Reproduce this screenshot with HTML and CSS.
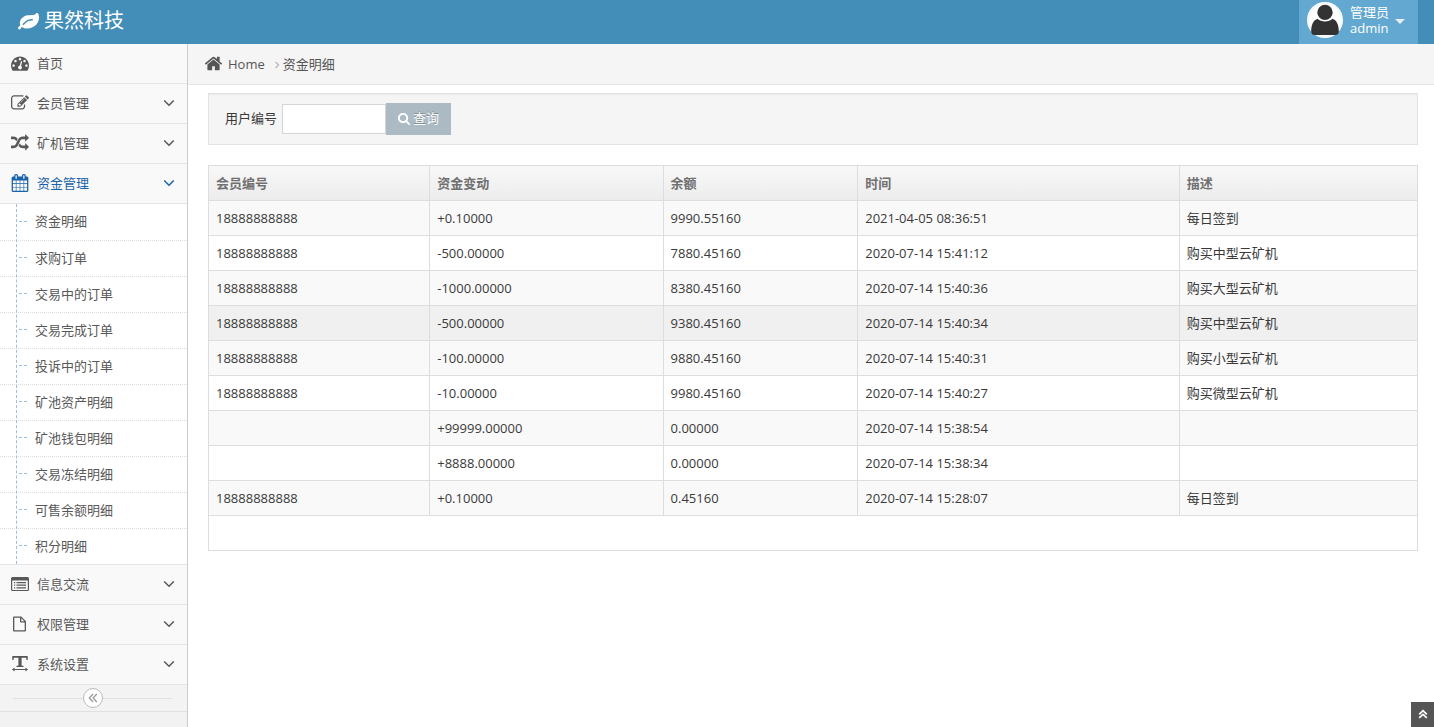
FILE: index.html
```
<!DOCTYPE html>
<html lang="zh-CN">
<head>
<meta charset="utf-8">
<title>资金明细</title>
<link rel="stylesheet" href="styles.css">
</head>
<body>
<svg class="sprite" aria-hidden="true">
  <symbol id="leaf" viewBox="0 0 1792 1792"><path d="M1280 832q0-26-19-45t-45-19q-172 0-318 49.5t-259.5 134-235.5 219.5q-19 21-19 45 0 26 19 45t45 19q24 0 45-19 27-24 74-71t67-66q137-124 268.5-176t313.5-52q26 0 45-19t19-45zm512-198q0 95-20 193-46 224-184.5 383t-357.5 268q-214 108-438 108-148 0-286-47-15-5-88-42t-96-37q-16 0-39.5 32t-45 70-52.5 70-60 32q-43 0-63.5-17.5t-45.5-59.5q-2-4-6-11t-5.5-10-3-9.5-1.5-13.5q0-35 31-73.5t68-65.5 68-56 31-48q0-4-14-38t-16-44q-9-51-9-104 0-115 43.5-220t119-184.5 170.5-139 204-95.5q55-18 145-25.5t179.5-9 178.5-6 163.5-24 113.5-56.5l29.5-29.5 29.5-28 27-20 36.5-16 43.5-4.5q39 0 70.5 46t47.5 112 24 124 8 96z"/></symbol>
  <symbol id="dashboard" viewBox="0 0 1792 1792"><path d="M384 1152q0-53-37.5-90.5t-90.5-37.5-90.5 37.5-37.5 90.5 37.5 90.5 90.5 37.5 90.5-37.5 37.5-90.5zm192-448q0-53-37.5-90.5t-90.5-37.5-90.5 37.5-37.5 90.5 37.5 90.5 90.5 37.5 90.5-37.5 37.5-90.5zm428 481l101-382q6-26-7.5-48.5t-38.5-29.5-48 6.5-30 39.5l-101 382q-60 5-107 43.5t-63 98.5q-20 77 20 146t117 89 146-20 89-117q16-60-6-117t-72-91zm660-33q0-53-37.5-90.5t-90.5-37.5-90.5 37.5-37.5 90.5 37.5 90.5 90.5 37.5 90.5-37.5 37.5-90.5zm-640-640q0-53-37.5-90.5t-90.5-37.5-90.5 37.5-37.5 90.5 37.5 90.5 90.5 37.5 90.5-37.5 37.5-90.5zm448 192q0-53-37.5-90.5t-90.5-37.5-90.5 37.5-37.5 90.5 37.5 90.5 90.5 37.5 90.5-37.5 37.5-90.5zm320 448q0 261-141 483-19 29-54 29h-1402q-35 0-54-29-141-221-141-483 0-182 71-348t191-286 286-191 348-71 348 71 286 191 191 286 71 348z"/></symbol>
  <symbol id="edit" viewBox="0 0 1792 1792"><path d="M888 1184l116-116-152-152-116 116v56h96v96h56zm440-720q-16-16-33 1l-350 350q-17 17-1 33t33-1l350-350q17-17 1-33zm80 594v190q0 119-84.5 203.5t-203.5 84.5h-832q-119 0-203.5-84.5t-84.5-203.5v-832q0-119 84.5-203.5t203.5-84.5h832q63 0 117 25 15 7 18 23 3 17-9 29l-49 49q-14 14-32 8-23-6-45-6h-832q-66 0-113 47t-47 113v832q0 66 47 113t113 47h832q66 0 113-47t47-113v-126q0-13 9-22l64-64q15-15 35-7t20 29zm-96-738l288 288-672 672h-288v-288zm444 132l-92 92-288-288 92-92q28-28 68-28t68 28l152 152q28 28 28 68t-28 68z"/></symbol>
  <symbol id="random" viewBox="0 0 1792 1792"><path d="M666 481q-60 92-137 273-22-45-37-72.5t-40.5-63.5-51-56.5-63-35-81.5-14.5h-224q-14 0-23-9t-9-23v-192q0-14 9-23t23-9h224q250 0 410 225zm1126 799q0 14-9 23l-320 320q-9 9-23 9-13 0-22.5-9.5t-9.5-22.5v-192q-32 0-85 .5t-81 1-73-1-71-5-64-10.5-63-18.5-58-28.5-59-40-55-53.5-56-69.5q59-93 136-273 22 45 37 72.5t40.5 63.5 51 56.5 63 35 81.5 14.5h256v-192q0-14 9-23t23-9q12 0 24 10l319 319q9 9 9 23zm0-896q0 14-9 23l-320 320q-9 9-23 9-13 0-22.5-9.5t-9.5-22.5v-192h-256q-48 0-87 15t-69 45-51 61.5-45 77.5q-32 62-78 171-29 66-49.5 111t-54 105-64 100-74 83-90 68.5-106.5 42-128 16.5h-224q-14 0-23-9t-9-23v-192q0-14 9-23t23-9h224q48 0 87-15t69-45 51-61.5 45-77.5q32-62 78-171 29-66 49.5-111t54-105 64-100 74-83 90-68.5 106.5-42 128-16.5h256v-192q0-14 9-23t23-9q12 0 24 10l319 319q9 9 9 23z"/></symbol>
  <symbol id="calendar" viewBox="0 0 1792 1792"><path d="M192 1664h288v-288h-288v288zm352 0h320v-288h-320v288zm-352-352h288v-320h-288v320zm352 0h320v-320h-320v320zm-352-384h288v-288h-288v288zm736 736h320v-288h-320v288zm-384-736h320v-288h-320v288zm768 736h288v-288h-288v288zm-384-352h320v-320h-320v320zm-352-864v-288q0-13-9.5-22.5t-22.5-9.5h-64q-13 0-22.5 9.5t-9.5 22.5v288q0 13 9.5 22.5t22.5 9.5h64q13 0 22.5-9.5t9.5-22.5zm736 864h288v-320h-288v320zm-384-384h320v-288h-320v288zm384 0h288v-288h-288v288zm32-480v-288q0-13-9.5-22.5t-22.5-9.5h-64q-13 0-22.5 9.5t-9.5 22.5v288q0 13 9.5 22.5t22.5 9.5h64q13 0 22.5-9.5t9.5-22.5zm384-64v1280q0 52-38 90t-90 38h-1408q-52 0-90-38t-38-90v-1280q0-52 38-90t90-38h128v-96q0-66 47-113t113-47h64q66 0 113 47t47 113v96h384v-96q0-66 47-113t113-47h64q66 0 113 47t47 113v96h128q52 0 90 38t38 90z"/></symbol>
  <symbol id="list" viewBox="0 0 18 18"><path fill-rule="evenodd" d="M1.500 2h15Q18 2 18 3.500v11q0 1.500-1.500 1.500h-15Q0 16 0 14.500v-11Q0 2 1.500 2zM1.200 5.500v9q0 .4.4.4h14.800q.4 0 .4-.4v-9z"/><path d="M3 7h1.200v1.200H3zM5.500 7H15v1.200H5.500zM3 9.600h1.200v1.200H3zM5.500 9.600H15v1.200H5.500zM3 12.200h1.200v1.200H3zM5.500 12.200H15v1.200H5.500z"/></symbol>
  <symbol id="file" viewBox="0 0 18 18"><path fill-rule="evenodd" d="M3 1.500h7.200L15 6.300v9.200q0 1-1 1H3q-1 0-1-1v-13q0-1 1-1zM3.300 2.800v12.400h10.400V7.500H10q-1 0-1-1V2.800zM10.300 3.200v3h3z"/></symbol>
  <symbol id="textwidth" viewBox="0 0 18 18"><path d="M1.300 1h15.400v4h-1.100l-.6-2.300h-4.400v7.800l2 .5v1H5.400v-1l2-.5V2.700H3L2.400 5H1.300zM1 14.500l2.500-2v1.500h11v-1.500l2.500 2-2.500 2V15h-11v1.500z"/></symbol>
  <symbol id="home" viewBox="0 0 1792 1792"><path d="M1472 992v480q0 26-19 45t-45 19h-384v-384h-256v384h-384q-26 0-45-19t-19-45v-480q0-1 .5-3t.5-3l575-474 575 474q1 2 1 6zm223-69l-62 74q-8 9-21 11h-3q-13 0-21-7l-692-577-692 577q-12 8-24 7-13-2-21-11l-62-74q-8-10-7-23.500t11-21.500l719-599q32-26 76-26t76 26l244 204v-195q0-14 9-23t23-9h192q14 0 23 9t9 23v408l219 182q10 8 11 21.500t-7 23.500z"/></symbol>
  <symbol id="search" viewBox="0 0 1792 1792"><path d="M1216 832q0-185-131.500-316.500t-316.500-131.500-316.500 131.500-131.500 316.500 131.500 316.500 316.500 131.500 316.500-131.500 131.500-316.500zm512 832q0 52-38 90t-90 38q-54 0-90-38l-343-342q-179 124-399 124-143 0-273.500-55.500t-225-150-150-225-55.500-273.500 55.500-273.500 150-225 225-150 273.500-55.500 273.500 55.500 225 150 150 225 55.500 273.500q0 220-124 399l343 343q37 37 37 90z"/></symbol>
  <symbol id="down" viewBox="0 0 12 12"><path d="M1.200 3.500 6 8.300l4.800-4.800" fill="none" stroke="currentColor" stroke-width="1.500"/></symbol>
  <symbol id="double" viewBox="0 0 12 12"><path d="M6 2 2.300 6 6 10M9.800 2 6.100 6l3.700 4" fill="none" stroke="currentColor" stroke-width="1.300"/></symbol>
  <symbol id="double-up" viewBox="0 0 12 12"><path d="M2.200 6.300 6 2.700l3.800 3.600M2.200 9.900 6 6.300l3.800 3.600" fill="none" stroke="currentColor" stroke-width="1.700"/></symbol>
</svg>

<header class="navbar">
  <a class="brand" href="#"><svg class="brand-icon"><use href="#leaf"/></svg>果然科技</a>
  <button class="user" type="button">
    <svg class="avatar" viewBox="0 0 36 36" aria-hidden="true"><circle cx="18" cy="18" r="18" fill="#fff"/><circle cx="18" cy="18" r="16.500" fill="none" stroke="#e4eaee" stroke-width=".6"/><circle cx="18" cy="10.400" r="7.700" fill="#333"/><path fill="#333" d="M4.200 29.500c0-7 2.300-11.300 6.300-12.700 2 1.700 4.600 2.700 7.500 2.700s5.500-1 7.500-2.700c4 1.400 6.300 5.700 6.300 12.700 0 2.500-1.500 3.500-3.500 3.500H7.700c-2 0-3.500-1-3.500-3.500z"/></svg>
    <span class="user-info">管理员<br>admin</span>
    <span class="caret"></span>
  </button>
</header>

<div class="layout">
  <aside class="sidebar">
    <nav>
      <ul class="menu">
        <li><a href="#"><svg class="icon"><use href="#dashboard"/></svg>首页</a></li>
        <li><a href="#"><svg class="icon"><use href="#edit"/></svg>会员管理<svg class="arrow"><use href="#down"/></svg></a></li>
        <li><a href="#"><svg class="icon"><use href="#random"/></svg>矿机管理<svg class="arrow"><use href="#down"/></svg></a></li>
        <li class="open"><a href="#"><svg class="icon"><use href="#calendar"/></svg>资金管理<svg class="arrow"><use href="#down"/></svg></a>
          <ul class="submenu">
            <li><a href="#">资金明细</a></li>
            <li><a href="#">求购订单</a></li>
            <li><a href="#">交易中的订单</a></li>
            <li><a href="#">交易完成订单</a></li>
            <li><a href="#">投诉中的订单</a></li>
            <li><a href="#">矿池资产明细</a></li>
            <li><a href="#">矿池钱包明细</a></li>
            <li><a href="#">交易冻结明细</a></li>
            <li><a href="#">可售余额明细</a></li>
            <li><a href="#">积分明细</a></li>
          </ul>
        </li>
        <li><a href="#"><svg class="icon"><use href="#list"/></svg>信息交流<svg class="arrow"><use href="#down"/></svg></a></li>
        <li><a href="#"><svg class="icon"><use href="#file"/></svg>权限管理<svg class="arrow"><use href="#down"/></svg></a></li>
        <li><a href="#"><svg class="icon"><use href="#textwidth"/></svg>系统设置<svg class="arrow"><use href="#down"/></svg></a></li>
      </ul>
    </nav>
    <div class="collapse">
      <button type="button" aria-label="收起菜单"><svg><use href="#double"/></svg></button>
    </div>
  </aside>

  <main class="main">
    <nav class="breadcrumb">
      <svg class="icon"><use href="#home"/></svg>
      <a href="#">Home</a>
      <svg class="sep" viewBox="0 0 6 10"><path d="M1 1l4 4-4 4" fill="none" stroke="#b2b6bf" stroke-width="1.500"/></svg>
      <span>资金明细</span>
    </nav>
    <div class="content">
      <form class="search">
        <label for="uid">用户编号</label>
        <input id="uid" type="text">
        <button type="button"><svg><use href="#search"/></svg>查询</button>
      </form>
      <table class="records">
        <colgroup><col class="c-id"><col class="c-change"><col class="c-balance"><col class="c-time"><col></colgroup>
        <thead><tr><th>会员编号</th><th>资金变动</th><th>余额</th><th>时间</th><th>描述</th></tr></thead>
        <tbody>
          <tr><td>18888888888</td><td>+0.10000</td><td>9990.55160</td><td>2021-04-05 08:36:51</td><td>每日签到</td></tr>
          <tr><td>18888888888</td><td>-500.00000</td><td>7880.45160</td><td>2020-07-14 15:41:12</td><td>购买中型云矿机</td></tr>
          <tr><td>18888888888</td><td>-1000.00000</td><td>8380.45160</td><td>2020-07-14 15:40:36</td><td>购买大型云矿机</td></tr>
          <tr class="hovered"><td>18888888888</td><td>-500.00000</td><td>9380.45160</td><td>2020-07-14 15:40:34</td><td>购买中型云矿机</td></tr>
          <tr><td>18888888888</td><td>-100.00000</td><td>9880.45160</td><td>2020-07-14 15:40:31</td><td>购买小型云矿机</td></tr>
          <tr><td>18888888888</td><td>-10.00000</td><td>9980.45160</td><td>2020-07-14 15:40:27</td><td>购买微型云矿机</td></tr>
          <tr><td></td><td>+99999.00000</td><td>0.00000</td><td>2020-07-14 15:38:54</td><td></td></tr>
          <tr><td></td><td>+8888.00000</td><td>0.00000</td><td>2020-07-14 15:38:34</td><td></td></tr>
          <tr><td>18888888888</td><td>+0.10000</td><td>0.45160</td><td>2020-07-14 15:28:07</td><td>每日签到</td></tr>
          <tr><td colspan="5"></td></tr>
        </tbody>
      </table>
    </div>
  </main>
</div>
<a class="to-top" href="#" aria-label="回到顶部"><svg><use href="#double-up"/></svg></a>
</body>
</html>
```
FILE: styles.css
```
* { box-sizing: border-box; }

body {
  margin: 0;
  min-height: 100vh;
  display: flex;
  flex-direction: column;
  background: #fff;
  color: #393939;
  font: 13px/20px "Open Sans", "Noto Sans CJK SC", sans-serif;
}

a { color: inherit; text-decoration: none; }
ul { list-style: none; margin: 0; padding: 0; }
svg { fill: currentColor; flex: none; }
button, input { font: inherit; }
.sprite { display: none; }

/* Top bar */
.navbar {
  display: flex;
  justify-content: space-between;
  height: 44px;
  padding: 0 16px 0 18px;
  background: #438eb9;
  color: #fff;
}
.brand { display: flex; align-items: center; gap: 5px; font-size: 20px; padding-bottom: 2px; }
.brand-icon { width: 21px; height: 21px; margin-bottom: 2px; }
.user {
  display: flex;
  align-items: center;
  gap: 7px;
  padding: 0 12px 4px 8px;
  border: 0;
  background: #62a8d1;
  color: #fff;
  line-height: 16px;
  text-align: left;
}
.user-info { width: 42px; }
.avatar { width: 36px; height: 36px; }
.caret { border: 5px solid transparent; border-top-color: #e8eff4; border-bottom: 0; margin: 2px 1px 0 -4px; }

.layout { flex: 1; display: flex; }

/* Sidebar */
.sidebar {
  flex: none;
  width: 188px;
  background: #f2f2f2;
  border-right: 1px solid #ccc;
  color: #585858;
}
.menu > li { border-bottom: 1px solid #e5e5e5; }
.menu > li > a {
  display: flex;
  align-items: center;
  height: 39px;
  padding: 0 12px 2px 11px;
  background: #f9f9f9;
}
.icon { width: 18px; height: 18px; margin-right: 8px; }
.arrow { width: 12px; height: 12px; margin-left: auto; }
.menu > .open > a { color: #1963aa; }

.submenu {
  position: relative;
  background: #fff;
  border-top: 1px solid #e5e5e5;
}
.submenu::before {
  content: "";
  position: absolute;
  top: 0;
  bottom: 0;
  left: 16px;
  border-left: 1px dashed #9dbddf;
}
.submenu li + li { border-top: 1px dotted #ddd; }
.submenu a { display: flex; align-items: center; gap: 8px; height: 35px; padding: 0 0 2px 19px; }
.submenu li:first-child a { height: 36px; }
.submenu a::before { content: ""; width: 8px; border-top: 1px dashed #9dbddf; }

.collapse {
  display: flex;
  align-items: center;
  height: 27px;
  padding: 0 15px 0 13px;
  border-bottom: 1px solid #e0e0e0;
  background: #f3f3f3;
}
.collapse::before, .collapse::after { content: ""; flex: 1; border-top: 1px solid #e0e0e0; }
.collapse button {
  display: grid;
  place-items: center;
  width: 20px;
  height: 20px;
  padding: 0;
  border: 1px solid #bbb;
  border-radius: 50%;
  background: #fff;
  color: #999;
}
.collapse svg { width: 12px; height: 12px; }

/* Main column */
.main { flex: 1; min-width: 0; }
.breadcrumb {
  display: flex;
  align-items: center;
  height: 41px;
  padding: 0 0 1px 16px;
  border-bottom: 1px solid #e5e5e5;
  background: #f5f5f5;
  color: #555;
}
.breadcrumb .icon { width: 19px; height: 19px; margin-right: 5px; }
.breadcrumb .sep { width: 6px; height: 8px; margin: 2px 3px 0 9px; }

.content { padding: 8px 16px 24px 20px; }
.search {
  display: flex;
  align-items: center;
  height: 52px;
  padding: 0 16px;
  margin-bottom: 20px;
  border: 1px solid #e3e3e3;
  background: #f5f5f5;
  box-shadow: inset 0 1px 1px rgba(0, 0, 0, .05);
}
.search label { padding-bottom: 2px; }
.search input {
  width: 104px;
  height: 30px;
  margin-left: 5px;
  padding: 4px;
  border: 1px solid #d5d5d5;
  background: #fff;
  color: #858585;
}
.search button {
  display: flex;
  align-items: center;
  gap: 2px;
  height: 32px;
  padding: 0 12px 2px 11px;
  border: 0;
  background: #abbac3;
  color: #fff;
  text-shadow: 0 -1px 0 rgba(0, 0, 0, .25);
}
.search button svg { width: 14px; height: 13px; }

.records {
  width: 100%;
  table-layout: fixed;
  border-collapse: collapse;
}
.c-id { width: 18.3%; }
.c-change { width: 19.3%; }
.c-balance { width: 16.1%; }
.c-time { width: 26.6%; }
.records th, .records td {
  height: 35px;
  padding: 0 7px;
  border: 1px solid #ddd;
  text-align: left;
}
.records th { color: #707070; font-weight: bold; }
.records thead tr { background: linear-gradient(#f8f8f8, #ececec); }
.records tbody tr:nth-child(odd) { background: #f9f9f9; }
.records tbody .hovered { background: #f0f0f0; }

.to-top {
  position: fixed;
  right: 0;
  bottom: 0;
  display: grid;
  place-items: center;
  width: 23px;
  height: 25px;
  padding-bottom: 2px;
  background: #555;
  color: #fff;
}
.to-top svg { width: 12px; height: 12px; }
```
